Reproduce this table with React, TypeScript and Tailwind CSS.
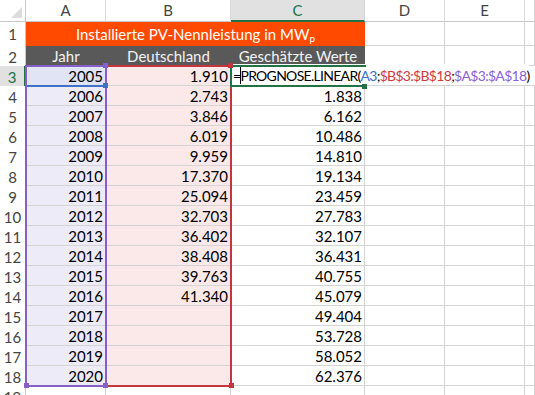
import React from "react";

const years = Array.from({ length: 16 }, (_, i) => String(2005 + i));
const de = ["1.910", "2.743", "3.846", "6.019", "9.959", "17.370", "25.094", "32.703", "36.402", "38.408", "39.763", "41.340", "", "", "", ""];
const est = ["", "1.838", "6.162", "10.486", "14.810", "19.134", "23.459", "27.783", "32.107", "36.431", "40.755", "45.079", "49.404", "53.728", "58.052", "62.376"];

const G = "border-[#d4d4d4]";

function ColHead({ label, sel }: { label: string; sel?: boolean }) {
  return sel ? (
    <div className="flex items-center justify-center border-r border-b-2 border-r-[#d4d4d4] border-b-[#217346] bg-[#e1e1e1] text-[#217346]">
      {label}
    </div>
  ) : (
    <div className="flex items-center justify-center border-r border-b border-r-[#dadada] border-b-[#c8c8c8] bg-white text-[#444]">
      {label}
    </div>
  );
}

function RowHead({ n, sel, center }: { n: number; sel?: boolean; center?: boolean }) {
  if (sel)
    return (
      <div className="flex items-end justify-center border-r-2 border-[#217346] bg-[#e1e1e1] leading-[18px] text-[#217346]">
        {n}
      </div>
    );
  return (
    <div
      className={
        center
          ? "flex items-center justify-center border-r border-[#c8c8c8] bg-white text-[#444]"
          : "flex items-end justify-center border-r border-[#c8c8c8] bg-white leading-[18px] text-[#444]"
      }
    >
      {n}
    </div>
  );
}

function Blank({ noRight }: { noRight?: boolean }) {
  return <div className={noRight ? `border-b ${G}` : `border-r border-b ${G}`} />;
}

function Num({ v, bg }: { v: string; bg: string }) {
  return (
    <div className={`flex items-end justify-end border-r border-b ${G} pr-[2px] leading-[18px] ${bg}`}>{v}</div>
  );
}

export default function App() {
  return (
    <div className="relative h-[395px] w-[535px] overflow-hidden bg-white font-['Lato','Liberation_Sans',sans-serif] text-[15px] text-black">
      <div className="grid grid-cols-[26px_80px_125px_134px_80px_80px_10px] grid-rows-[22px_24px_repeat(18,20px)]">
        {/* header row */}
        <div className="relative border-r border-b border-r-[#c8c8c8] border-b-[#c8c8c8] bg-white">
          <svg className="absolute bottom-[3px] right-[3px]" width="11" height="11" viewBox="0 0 11 11">
            <polygon points="11,0 11,11 0,11" fill="#dcdcdc" />
          </svg>
        </div>
        <ColHead label="A" />
        <ColHead label="B" />
        <ColHead label="C" sel />
        <ColHead label="D" />
        <ColHead label="E" />
        <ColHead label="" />

        {/* row 1 */}
        <RowHead n={1} center />
        <div className="col-span-3 flex items-center justify-center bg-[#ff4a00] text-white">
          <span>
            Installierte PV-Nennleistung in MW<sub className="text-[10px]">p</sub>
          </span>
        </div>
        <Blank />
        <Blank />
        <Blank />

        {/* row 2 */}
        <RowHead n={2} />
        <div className="flex items-end justify-center bg-[#595959] pb-[1px] leading-[18px] text-[#f2f2f2]">Jahr</div>
        <div className="flex items-end justify-center bg-[#595959] pb-[1px] leading-[18px] text-[#f2f2f2]">Deutschland</div>
        <div className="flex items-end justify-center bg-[#595959] pb-[1px] leading-[18px] text-[#f2f2f2]">Geschätzte Werte</div>
        <Blank />
        <Blank />
        <Blank />

        {/* data rows */}
        {years.map((y, i) => {
          const r = i + 3;
          if (r === 3) {
            return (
              <React.Fragment key={r}>
                <RowHead n={r} sel />
                <Num v={y} bg="bg-[#e1e4f5]" />
                <Num v={de[i]} bg="bg-[#fbe8e8]" />
                <div className={`relative z-10 flex items-end border-b ${G} pl-[2px] leading-[18px]`}>
                  <span className="whitespace-nowrap bg-white text-[14px] tracking-[-0.7px]">
                    =<span className="mr-[-1px] inline-block h-[17px] w-px translate-y-[3px] bg-black align-baseline" />
                    PROGNOSE.LINEAR(<span className="text-[#3a70cc]">A3</span>;
                    <span className="text-[#d2383c]">$B$3:$B$18</span>;
                    <span className="text-[#8a63d2]">$A$3:$A$18</span>)
                  </span>
                </div>
                <Blank noRight />
                <Blank noRight />
                <Blank noRight />
              </React.Fragment>
            );
          }
          return (
            <React.Fragment key={r}>
              <RowHead n={r} />
              <Num v={y} bg="bg-[#eeebf8]" />
              <Num v={de[i]} bg="bg-[#fbe8e8]" />
              <Num v={est[i]} bg="bg-white" />
              <Blank />
              <Blank />
              <Blank />
            </React.Fragment>
          );
        })}

        {/* row 19 */}
        <RowHead n={19} />
        <Blank />
        <Blank />
        <Blank />
        <Blank />
        <Blank />
        <Blank />
      </div>

      {/* range highlight overlays */}
      <div className="pointer-events-none absolute left-[25px] top-[65px] z-20 h-[22px] w-[82px] border-2 border-[#3e72c8]" />
      <div className="pointer-events-none absolute left-[105px] top-[65px] z-20 h-[322px] w-[127px] border-2 border-[#c4353c]" />
      <div className="pointer-events-none absolute left-[25px] top-[65px] z-20 h-[322px] w-[82px] border-2 border-[#8660c8]" />
      <div className="pointer-events-none absolute left-[230px] top-[65px] z-20 h-[22px] w-[136px] border-2 border-r-0 border-[#217346]" />

      {/* handles */}
      <div className="absolute left-[103px] top-[83px] z-30 h-[5px] w-[5px] bg-[#3e72c8]" />
      <div className="absolute left-[228px] top-[63px] z-30 h-[5px] w-[5px] bg-[#c4353c]" />
      <div className="absolute left-[229px] top-[383px] z-30 h-[5px] w-[5px] bg-[#c4353c]" />
      <div className="absolute left-[103px] top-[63px] z-30 h-[5px] w-[5px] bg-[#8660c8]" />
      <div className="absolute left-[103px] top-[383px] z-30 h-[5px] w-[5px] bg-[#8660c8]" />
      <div className="absolute left-[24px] top-[383px] z-30 h-[5px] w-[5px] bg-[#8660c8]" />
      <div className="absolute left-[362px] top-[84px] z-30 h-[5px] w-[5px] bg-[#217346]" />
    </div>
  );
}
